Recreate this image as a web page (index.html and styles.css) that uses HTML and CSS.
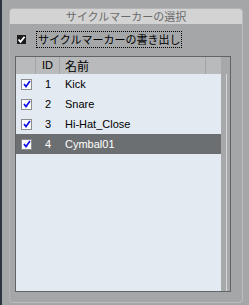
FILE: index.html
```html
<!DOCTYPE html>
<html lang="ja">
<head>
<meta charset="utf-8">
<link rel="stylesheet" href="styles.css">
</head>
<body>
<div class="group">
  <div class="group-title">サイクルマーカーの選択</div>
  <div class="group-body">
    <div class="export-row">
      <span class="cb-dark"><svg width="9" height="9" viewBox="0 0 9 9"><path d="M1.5 4.5 L3.5 6.8 L7.6 1.8" fill="none" stroke="#fff" stroke-width="1.8"/></svg></span>
      <span class="focus-label">サイクルマーカーの書き出し</span>
    </div>
    <div class="table">
      <div class="table-main">
        <div class="thead">
          <div class="th c-cb"></div>
          <div class="th c-id">ID</div>
          <div class="th c-name">名前</div>
          <div class="th c-rest"></div>
        </div>
        <div class="tbody">
          <div class="tr">
            <div class="td c-cb"><span class="cb"><svg width="10" height="10" viewBox="0 0 10 10"><path d="M2 5 L4 7.5 L8 2" fill="none" stroke="#1010e8" stroke-width="1.7"/></svg></span></div>
            <div class="td c-id">1</div>
            <div class="td c-name">Kick</div>
          </div>
          <div class="tr">
            <div class="td c-cb"><span class="cb"><svg width="10" height="10" viewBox="0 0 10 10"><path d="M2 5 L4 7.5 L8 2" fill="none" stroke="#1010e8" stroke-width="1.7"/></svg></span></div>
            <div class="td c-id">2</div>
            <div class="td c-name">Snare</div>
          </div>
          <div class="tr">
            <div class="td c-cb"><span class="cb"><svg width="10" height="10" viewBox="0 0 10 10"><path d="M2 5 L4 7.5 L8 2" fill="none" stroke="#1010e8" stroke-width="1.7"/></svg></span></div>
            <div class="td c-id">3</div>
            <div class="td c-name">Hi-Hat_Close</div>
          </div>
          <div class="tr selected">
            <div class="td c-cb"><span class="cb"><svg width="10" height="10" viewBox="0 0 10 10"><path d="M2 5 L4 7.5 L8 2" fill="none" stroke="#1010e8" stroke-width="1.7"/></svg></span></div>
            <div class="td c-id">4</div>
            <div class="td c-name">Cymbal01</div>
          </div>
        </div>
      </div>
      <div class="vscroll"><div class="vline"></div></div>
    </div>
  </div>
</div>
</body>
</html>
```
FILE: styles.css
```css
html, body {
  margin: 0;
  padding: 0;
}
body {
  width: 247px;
  height: 305px;
  background: #a4a6a8;
  border-left: 2px solid #2e3540;
  font-family: "Liberation Sans", "Noto Sans CJK JP", sans-serif;
  font-size: 11px;
  overflow: hidden;
}
.group {
  box-sizing: border-box;
  margin: 8px 0 0 7px;
  width: 234px;
  height: 295px;
  border: 1px solid #b2b4b6;
  border-right-color: #babcbe;
  border-bottom-color: #babcbe;
  border-radius: 4px;
  background: #a4a6a8;
}
.group-title {
  height: 15px;
  line-height: 15px;
  background: #d3d3d3;
  border-radius: 3px 3px 0 0;
  text-align: center;
  color: #6a6a6a;
  font-family: "Noto Sans CJK JP", sans-serif;
  font-size: 11px;
}
.group-body {
  padding: 0 0 0 5px;
}
.export-row {
  display: flex;
  align-items: center;
  margin-top: 7px;
  height: 17px;
}
.cb-dark {
  display: block;
  width: 9px;
  height: 9px;
  background: #1c1c1c;
  margin-left: 2px;
}
.cb-dark svg, .cb svg { display: block; }
.focus-label {
  margin-left: 10px;
  box-sizing: border-box;
  height: 17px;
  line-height: 15px;
  padding: 0 1px;
  border: 1px dotted #000;
  color: #000;
  font-family: "Noto Sans CJK JP", sans-serif;
  font-size: 11px;
}
.table {
  display: flex;
  box-sizing: border-box;
  margin-top: 8px;
  width: 216px;
  height: 236px;
  border: 1px solid #626466;
}
.table-main {
  width: 205px;
  display: flex;
  flex-direction: column;
}
.thead {
  display: flex;
  height: 17px;
  background: #b9babb;
}
.th {
  box-sizing: border-box;
  height: 17px;
  line-height: 17px;
  color: #000;
  border-right: 1px solid #a2a4a6;
}
.th.c-name {
  font-family: "Noto Sans CJK JP", sans-serif;
  font-size: 12px;
}
.th.c-rest { border-right: none; flex: 1; }
.c-cb { width: 20px; }
.c-id { width: 24px; text-align: center; }
.c-name { width: 146px; padding-left: 5px; box-sizing: border-box; }
.tbody {
  flex: 1;
  background: #e3eaf2;
}
.tr {
  display: flex;
  height: 20px;
  align-items: center;
  color: #000;
}
.tr.selected {
  background: #6c6f72;
  color: #fff;
}
.td {
  box-sizing: border-box;
  line-height: 20px;
}
.td.c-cb {
  display: flex;
  align-items: center;
  padding-left: 5px;
}
.cb {
  display: block;
  box-sizing: border-box;
  width: 11px;
  height: 11px;
  background: #fff;
  border: 1px solid #8a8c8e;
  padding: 0;
}
.cb svg { margin: -0.5px 0 0 -0.5px; }
.vscroll {
  flex: 1;
  background: #a6a8aa;
  display: flex;
  justify-content: flex-end;
  padding: 17px 3px 0 0;
}
.vline {
  width: 1px;
  background: #d6d8da;
}
```
